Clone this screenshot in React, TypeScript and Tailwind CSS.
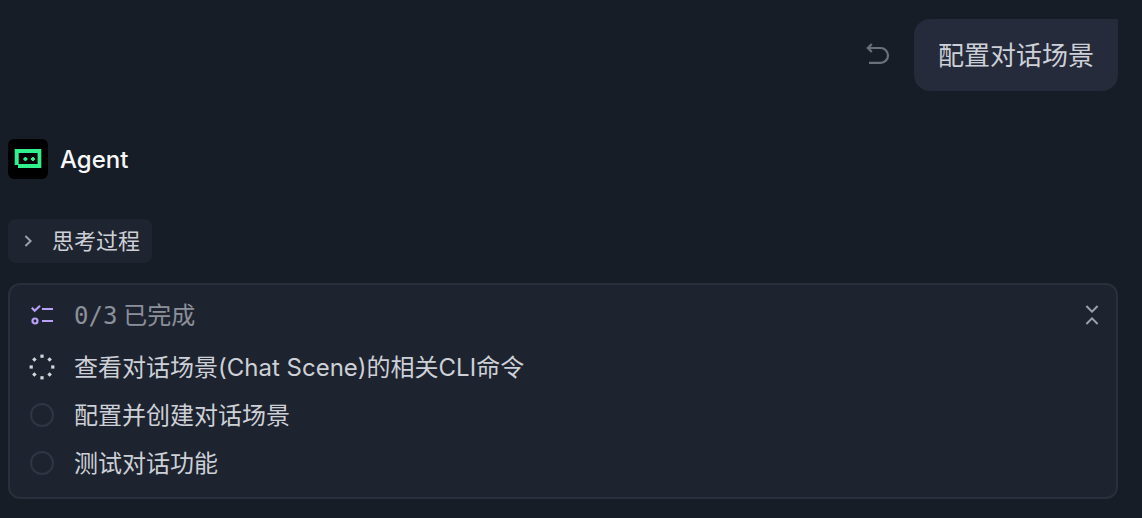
import React from "react";

type Status = "running" | "pending";

const tasks: { label: string; status: Status }[] = [
  { label: "查看对话场景(Chat Scene)的相关CLI命令", status: "running" },
  { label: "配置并创建对话场景", status: "pending" },
  { label: "测试对话功能", status: "pending" },
];

const spinnerDots = [
  [12, 1.2, 0],
  [19.6, 4.4, 45],
  [22.8, 12, 0],
  [19.6, 19.6, 45],
  [12, 22.8, 0],
  [4.4, 19.6, 45],
  [1.2, 12, 0],
  [4.4, 4.4, 45],
];

function UndoIcon() {
  return (
    <svg width="24" height="24" viewBox="0 0 24 24" fill="none" stroke="#6b707b" strokeWidth="2.2">
      <path d="M5.8 0.9 1.8 5 5.8 9.1" />
      <path d="M2 5H14.6a7.3 7.3 0 0 1 0 14.8H3" />
    </svg>
  );
}

function AgentLogo() {
  return (
    <svg width="40" height="40" viewBox="0 0 40 40" fill="#32f08c">
      <path fillRule="evenodd" d="M6.7 10H33.3V29H10V26H6.7ZM10.7 14V25H29.6V14Z" />
      <path d="M15.4 19h1v-1h2v1h1v2h-1v1h-2v-1h-1zM22.9 19h1v-1h2v1h1v2h-1v1h-2v-1h-1z" />
    </svg>
  );
}

function ChecklistIcon() {
  return (
    <svg width="24" height="24" viewBox="0 0 24 24" fill="none" stroke="#b9a0f8" strokeWidth="2.2">
      <path d="M1.8 4.8 4.7 7.7 10 2.8" />
      <path d="M12 6H23M12 18H23" />
      <circle cx="5" cy="18" r="2.5" />
    </svg>
  );
}

function CollapseIcon() {
  return (
    <svg width="24" height="24" viewBox="0 0 24 24" fill="none" stroke="#9ca0aa" strokeWidth="2">
      <path d="M6.4 3 12 8.6 17.6 3M6.4 21 12 15.4 17.6 21" />
    </svg>
  );
}

function StatusIcon({ status }: { status: Status }) {
  if (status === "pending") {
    return (
      <svg width="24" height="24" viewBox="0 0 24 24" fill="none" stroke="#303544" strokeWidth="2">
        <circle cx="12" cy="12" r="11" />
      </svg>
    );
  }
  return (
    <svg width="24" height="24" viewBox="0 0 24 24" fill="#d5d7dc" overflow="visible">
      {spinnerDots.map(([x, y, angle], i) => (
        <rect key={i} x={x - 1.6} y={y - 1.6} width="3.2" height="3.2" transform={`rotate(${angle} ${x} ${y})`} />
      ))}
    </svg>
  );
}

export default function App() {
  return (
    <main className="min-h-screen bg-[#171d26] pt-[19px] pr-6 pb-5 pl-2 font-[Inter,'Noto_Sans_CJK_SC',sans-serif] text-[#cdd0d7]">
      <div className="flex items-center justify-end gap-6">
        <button type="button" aria-label="撤销">
          <UndoIcon />
        </button>
        <p className="rounded-2xl rounded-tr-none bg-[#262b3b] px-6 pt-[17px] pb-[15px] text-[26px] leading-10">
          配置对话场景
        </p>
      </div>

      <header className="mt-12 flex items-center gap-3">
        <span className="overflow-hidden rounded-md bg-black">
          <AgentLogo />
        </span>
        <h1 className="pt-0.5 text-2xl leading-9 font-medium text-[#f6f7f9]">Agent</h1>
      </header>

      <button
        type="button"
        aria-expanded="false"
        className="mt-10 flex h-11 items-center gap-3 rounded-lg bg-[#1f2530] pr-3 pl-2 text-[22px]"
      >
        <svg width="24" height="24" viewBox="0 0 24 24" fill="none" stroke="#9ca0aa" strokeWidth="2">
          <path d="M9.4 7 14.6 12 9.4 17" />
        </svg>
        <span>思考过程</span>
      </button>

      <section className="mt-5 rounded-xl border-2 border-[#28303b] bg-[#1e242f] pr-3 pb-3 pl-5 text-2xl">
        <div className="flex h-[60px] items-center gap-5">
          <ChecklistIcon />
          <h2 className="flex flex-1 items-baseline gap-1.5 pt-0.5 text-[#8c909a]">
            <span className="font-['DejaVu_Sans_Mono',monospace]">0/3</span>
            <span>已完成</span>
          </h2>
          <button type="button" aria-label="收起">
            <CollapseIcon />
          </button>
        </div>
        <ul className="flex flex-col gap-1">
          {tasks.map((task) => (
            <li key={task.label} className="flex h-11 items-center gap-5">
              <StatusIcon status={task.status} />
              <span className="pt-0.5">{task.label}</span>
            </li>
          ))}
        </ul>
      </section>
    </main>
  );
}
